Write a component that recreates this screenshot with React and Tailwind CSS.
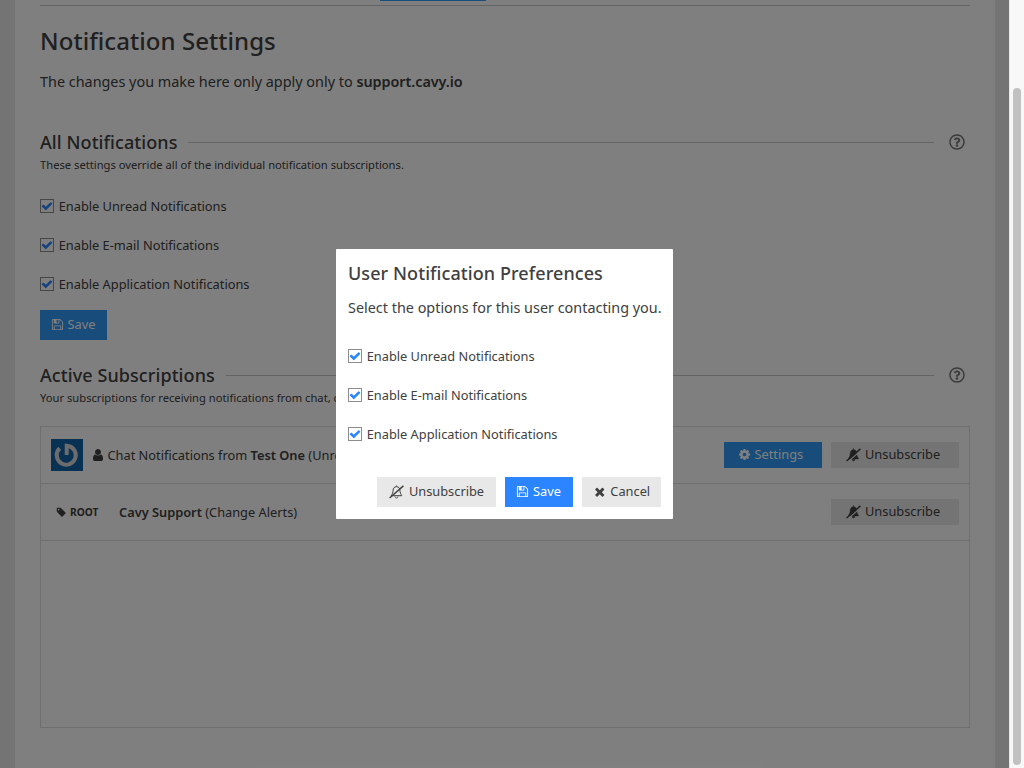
import React from 'react';
import { FaRegQuestionCircle } from 'react-icons/fa';

const PATHS = {
  floppy: 'M512 1536h768v-384h-768v384zm896 0h128v-896q0-14-10-38.500t-20-34.500l-281-281q-10-10-34-20t-39-10v416q0 40-28 68t-68 28h-576q-40 0-68-28t-28-68v-416h-128v1280h128v-416q0-40 28-68t68-28h832q40 0 68 28t28 68v416zm-384-928v-320q0-13-9.500-22.500t-22.500-9.500h-192q-13 0-22.500 9.500t-9.500 22.500v320q0 13 9.500 22.500t22.500 9.500h192q13 0 22.500-9.500t9.500-22.500zm640 32v928q0 40-28 68t-68 28h-1344q-40 0-68-28t-28-68v-1344q0-40 28-68t68-28h928q40 0 88 20t76 48l280 280q28 28 48 76t20 88z',
  times: 'M1490 1322q0 40-28 68l-136 136q-28 28-68 28t-68-28l-294-294-294 294q-28 28-68 28t-68-28l-136-136q-28-28-28-68t28-68l294-294-294-294q-28-28-28-68t28-68l136-136q28-28 68-28t68 28l294 294 294-294q28-28 68-28t68 28l136 136q28 28 28 68t-28 68l-294 294 294 294q28 28 28 68z',
  check: 'M1671 566q0 40-28 68l-724 724-136 136q-28 28-68 28t-68-28l-136-136-362-362q-28-28-28-68t28-68l136-136q28-28 68-28t68 28l294 295 656-657q28-28 68-28t68 28l136 136q28 28 28 68z',
  cog: 'M1152 896q0-106-75-181t-181-75-181 75-75 181 75 181 181 75 181-75 75-181zm512-109v222q0 12-8 23t-20 13l-185 28q-19 54-39 91 35 50 107 138 10 12 10 25t-9 23q-27 37-99 108t-94 71q-12 0-26-9l-138-108q-44 23-91 38-16 136-29 186-7 28-36 28h-222q-14 0-24.500-8.500t-11.500-21.500l-28-184q-49-16-90-37l-141 107q-10 9-25 9-14 0-25-11-126-114-165-168-7-10-7-23 0-12 8-23 15-21 51-66.500t54-70.500q-27-50-41-99l-183-27q-13-2-21-12.500t-8-23.500v-222q0-12 8-23t19-13l186-28q14-46 39-92-40-57-107-138-10-12-10-24 0-10 9-23 26-36 98.500-107.500t94.500-71.500q13 0 26 10l138 107q44-23 91-38 16-136 29-186 7-28 36-28h222q14 0 24.500 8.500t11.500 21.500l28 184q49 16 90 37l142-107q9-9 24-9 13 0 25 10 129 119 165 170 7 8 7 22 0 12-8 23-15 21-51 66.500t-54 70.500q26 50 41 98l183 28q13 2 21 12.500t8 23.500z',
  user: 'M1536 1399q0 109-62.500 187t-150.500 78h-854q-88 0-150.500-78t-62.500-187q0-85 8.500-160.500t31.500-152 58.500-131 94-89 134.500-34.500q131 128 313 128t313-128q76 0 134.500 34.500t94 89 58.500 131 31.500 152 8.500 160.500zm-256-887q0 159-112.500 271.500t-271.500 112.500-271.500-112.500-112.500-271.500 112.500-271.500 271.500-112.500 271.500 112.500 112.500 271.500z',
  tag: 'M576 448q0-53-37.500-90.500t-90.500-37.500-90.500 37.500-37.500 90.500 37.500 90.500 90.500 37.500 90.500-37.500 37.500-90.500zm1067 576q0 53-37 90l-491 492q-39 37-91 37-53 0-90-37l-715-716q-38-37-64.500-101t-26.500-117v-416q0-52 38-90t90-38h416q53 0 117 26.500t102 64.500l715 714q37 39 37 91z',
};

const Icon = ({ name, className }) => (
  <svg viewBox="0 0 1792 1792" fill="currentColor" className={`shrink-0 ${className}`}>
    <path d={PATHS[name]} />
  </svg>
);

const BellSlash = ({ solid = false }) => (
  <svg viewBox="0 0 15 14" className="h-[14px] w-[15px] shrink-0" fill="none" stroke="currentColor">
    <path
      d={
        solid
          ? 'M7.500 1.500C5.400 1.800 4.300 3.300 4.200 5.200C4.100 7.600 3.600 8.900 2.500 10.300V10.900H12.500V10.300C11.400 8.900 10.900 7.600 10.800 5.200C10.700 3.300 9.600 1.800 7.500 1.500Z'
          : 'M7.500 1.600C5.100 1.900 4.200 3.300 4.100 5.200C4 7.700 3.300 8.900 2.200 10.700H12.800C11.700 8.900 11 7.700 10.900 5.200C10.800 3.300 9.900 1.900 7.500 1.600Z'
      }
      fill={solid ? 'currentColor' : 'none'}
      strokeWidth={solid ? '0.4' : '1'}
    />
    <path
      d={solid ? 'M6.300 11.500H8.700Q8.600 12.800 7.500 12.800Q6.400 12.800 6.300 11.500Z' : 'M6 11.500Q6.200 13 7.500 13.100Q8.800 13 9 11.500'}
      fill={solid ? 'currentColor' : 'none'}
      strokeWidth="0.8"
    />
    <path d="M7.500 0.500V1.500" strokeWidth="1.100" />
    {solid && <path className="text-[#e8e8e8]" d="M1.500 14.200L15.200 2.200" stroke="currentColor" strokeWidth="1.200" />}
    <path d="M0.600 13L14.400 0.900" strokeWidth="1.400" />
  </svg>
);

const Checkbox = ({ label }) => (
  <label className="flex h-[39px] items-center text-[12.800px]">
    <span className="mr-[4.700px] mb-[2px] flex size-[14px] shrink-0 items-center justify-center border border-[#8c8c8c] text-[#2a85ff]">
      <Icon name="check" className="size-[12px]" />
    </span>
    {label}
  </label>
);

const CheckboxList = () => (
  <div>
    <Checkbox label="Enable Unread Notifications" />
    <Checkbox label="Enable E-mail Notifications" />
    <Checkbox label="Enable Application Notifications" />
  </div>
);

const Section = ({ title, note }) => (
  <div>
    <div className="flex h-[28px] items-center">
      <h2 className="text-[18px] font-medium tracking-[0.08px]">{title}</h2>
      <span className="mr-[15px] ml-[11px] h-px flex-1 bg-[#c8c8c8]" />
      <FaRegQuestionCircle className="mr-[5px] mb-px size-[16px] text-[#777]" />
    </div>
    <p className="h-[17px] text-[11.200px] leading-[17px]">{note}</p>
  </div>
);

const Avatar = () => (
  <svg viewBox="0 0 32 32" className="size-[32px]">
    <rect width="32" height="32" fill="#1262a8" />
    <path d="M8.700 9.300A9.500 9.500 0 1 0 15.700 6.700V16" fill="none" stroke="#d8d8d8" strokeWidth="4" />
  </svg>
);

const RowButton = ({ children, className }) => (
  <button className={`flex h-[26px] items-center text-[12.800px] ${className}`}>{children}</button>
);

export default function App() {
  return (
    <div className="relative flex h-[768px] w-[1024px] overflow-hidden bg-[#f8f8f8] font-['Noto_Sans',sans-serif] text-[#404040]">
      <div className="h-full w-[1009px] bg-[#e9e9e9] pr-[14px] pl-[15px]">
        <main className="h-full bg-white px-[25px]">
          <div className="h-[6px] border-b border-[#c8c8c8]">
            <div className="ml-[340px] h-px w-[106px] bg-[#3098f4]" />
          </div>
          <h1 className="mt-[18px] h-[34px] text-[24px] leading-[34px] font-medium tracking-[0.06px]">
            Notification Settings
          </h1>
          <p className="mt-[13px] mb-[35px] h-[22px] text-[14.400px] leading-[22px]">
            The changes you make here only apply only to{' '}
            <b className="font-semibold tracking-[-0.050px]">support.cavy.io</b>
          </p>
          <Section title="All Notifications" note="These settings override all of the individual notification subscriptions." />
          <div className="mt-[14px]">
            <CheckboxList />
          </div>
          <button className="mt-[6px] mb-[21px] flex h-[30px] w-[67px] items-center gap-[4px] bg-[#3098f4] pl-[10.500px] text-[12.800px] text-white">
            <Icon name="floppy" className="mb-px size-[13px]" />
            Save
          </button>
          <Section title="Active Subscriptions" note="Your subscriptions for receiving notifications from chat, code" />
          <div className="mt-[20px] h-[302px] border border-[#dedede] text-[12.800px]">
            <div className="flex h-[57px] items-center border-b border-[#dedede] px-[10px]">
              <Avatar />
              <Icon name="user" className="mr-[3px] ml-[7.500px] size-[14px]" />
              <span className="flex-1 pt-px">
                Chat Notifications from <b className="font-semibold">Test One</b> (Unread)
              </span>
              <RowButton className="mr-[9px] w-[98px] gap-[4px] bg-[#3098f4] pl-[13.500px] text-white">
                <Icon name="cog" className="mb-px size-[13px]" />
                Settings
              </RowButton>
              <RowButton className="w-[128px] gap-[4px] bg-[#e8e8e8] pl-[15px]">
                <BellSlash solid />
                Unsubscribe
              </RowButton>
            </div>
            <div className="flex h-[57px] items-center border-b border-[#dedede] px-[10px]">
              <Icon name="tag" className="ml-[4.500px] size-[10.500px]" />
              <span className="ml-[4px] w-[49px] pt-px text-[10.200px] font-bold">ROOT</span>
              <span className="flex-1 pt-px">
                <b className="font-semibold">Cavy Support</b> (Change Alerts)
              </span>
              <RowButton className="w-[128px] gap-[4px] bg-[#e8e8e8] pl-[15px]">
                <BellSlash solid />
                Unsubscribe
              </RowButton>
            </div>
          </div>
        </main>
      </div>
      <div className="h-full w-[15px] border-l border-[#e8e8e8] pt-[88px] pl-[3px]">
        <div className="h-[677px] w-[8px] rounded-full bg-[#c1c1c1]" />
      </div>

      <div className="absolute inset-y-0 left-0 flex w-[1009px] items-center justify-center bg-black/50">
        <div role="dialog" className="h-[270px] w-[337px] rounded-[1px] bg-white px-[12px] pt-[10px]">
          <h2 className="h-[28px] text-[18px] leading-[28px] font-medium tracking-[0.08px]">
            User Notification Preferences
          </h2>
          <p className="mt-[10px] mb-[18px] h-[22px] text-[14.400px] leading-[22px] whitespace-nowrap">
            Select the options for this user contacting you.
          </p>
          <CheckboxList />
          <div className="mt-[23px] flex justify-end gap-[9px] text-[12.800px]">
            <button className="flex h-[30px] w-[119px] items-center justify-center gap-[5px] bg-[#e8e8e8]">
              <BellSlash />
              Unsubscribe
            </button>
            <button className="flex h-[30px] w-[68px] items-center gap-[4px] bg-[#2a85ff] pl-[11px] text-white">
              <Icon name="floppy" className="mb-px size-[13px]" />
              Save
            </button>
            <button className="flex h-[30px] w-[79px] items-center justify-center gap-[4px] bg-[#e8e8e8]">
              <Icon name="times" className="mb-px size-[13.500px]" />
              Cancel
            </button>
          </div>
        </div>
      </div>
    </div>
  );
}
